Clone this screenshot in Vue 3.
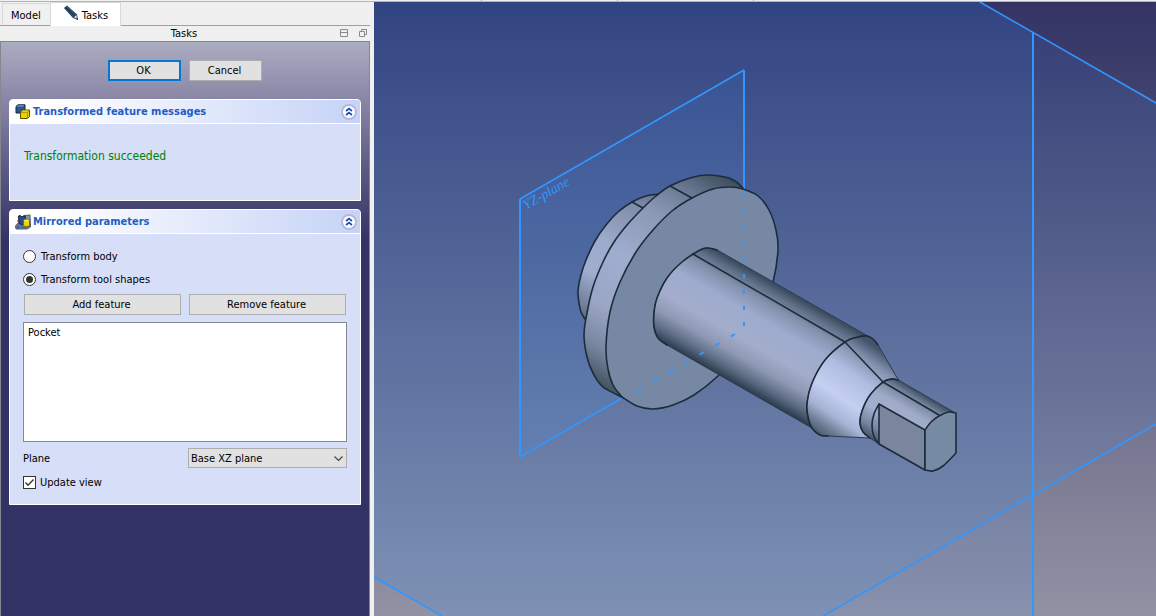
<script setup>
import { ref } from 'vue'

const mode = ref('shapes')
const plane = ref('xz')
const updateView = ref(true)
const features = ref(['Pocket'])

// Smooth curve commands through a list of points, continuing from the first one.
function through(pts) {
  let d = ''
  for (let i = 0; i < pts.length - 1; i++) {
    const a = pts[i - 1] || pts[i]
    const b = pts[i]
    const c = pts[i + 1]
    const e = pts[i + 2] || c
    d += ` C${b[0] + (c[0] - a[0]) / 6} ${b[1] + (c[1] - a[1]) / 6} ${c[0] - (e[0] - b[0]) / 6} ${c[1] - (e[1] - b[1]) / 6} ${c[0]} ${c[1]}`
  }
  return d
}
const open = (pts) => `M${pts[0][0]} ${pts[0][1]}${through(pts)}`
const back = (pts) => [...pts].reverse()

const hub = [[659, 194], [646, 196], [632, 202], [618, 212], [606, 225], [595, 241], [586, 260], [581, 275], [578, 291], [579, 303], [581, 312], [585, 319]]
const rim = [[743, 188], [735, 181], [725, 177], [707, 175], [690, 178], [670, 186], [656, 196], [643, 208], [627, 225], [614, 242], [603, 262], [593, 287], [587, 313], [584, 335], [587, 357], [593, 373], [603, 387], [622, 397]]
const face = [[622, 397], [613, 385], [608, 369], [606, 347], [610, 312], [620, 282], [636, 252], [653, 230], [672, 211], [692, 198], [713, 189], [730, 187], [743, 189], [758, 196], [769, 210], [776, 230], [778, 250], [773, 282], [760, 318], [742, 350], [718, 376], [694, 395], [673, 405], [653, 409], [637, 406], [622, 397]]
const root = [[717, 250], [708, 248], [700, 250], [682, 262], [667, 278], [657, 298], [654, 312], [654, 327], [658, 338], [667, 345]]
const shoulder = [[878, 345], [873, 339], [867, 336], [858, 337], [845, 342], [825, 360], [812, 383], [807, 403], [808, 417], [812, 428], [820, 435], [828, 436]]
const neck = [[898, 380], [892, 379], [883, 382], [870, 395], [862, 411], [860, 423], [863, 432], [870, 438]]

const shapes = {
  hub: `${open(hub)} L640 260 Z`,
  rim: `${open(rim)} L700 300 Z`,
  face: `${open(face)} Z`,
  shaft: `${open(root)} L812 428 L867 336 Z`,
  root: open(root),
  cone: `${open(shoulder)} L870 438${through(back(neck))} Z`,
  shoulder: open(shoulder),
  tip: `${open(neck)} L879 444 L925 470 V430 L953 412 Z`,
  neck: open(neck),
  step: open([[879, 404], [874, 414], [872, 425], [874, 437], [879, 444]]),
  end: `M925 470 V430${through([[925, 430], [931, 422], [939, 416], [949, 412], [956, 413]])} V453${through([[956, 453], [943, 466], [933, 471], [925, 470]])} Z`,
}
</script>

<template>
  <div class="app">
    <div class="toolbar-edge">
      <i class="tick"></i><i class="tick"></i><i class="tick"></i>
    </div>
    <div class="main">
      <aside class="dock">
        <nav class="tabs">
          <button type="button" class="tab">Model</button>
          <button type="button" class="tab active">
            <svg width="16" height="16" viewBox="0 0 16 16" aria-hidden="true">
              <path d="M1 3 L4 0.5 L14 9.5 L15 15 L10 13 Z" fill="#1d2f45" />
              <path d="M1.5 3 L4 1 L13.5 9.5 L10.5 12.5 Z" fill="#34587f" />
              <path d="M2.5 2.4 L12 11" stroke="#20384f" stroke-width="1.4" />
              <path d="M11 12.4 L13.3 10 L14 13.8 Z" fill="#e8eef4" />
              <path d="M13 13 L14.2 12.4 L15 15 Z" fill="#172530" />
            </svg>
            <span>Tasks</span>
          </button>
        </nav>
        <header class="title">
          <span>Tasks</span>
          <span class="tools">
            <button type="button" aria-label="Collapse">
              <svg width="9" height="9" viewBox="0 0 9 9"><path d="M0.5 0.5h7v7h-7z M0.5 3.5h7" fill="none" stroke="#8a8a8a" /></svg>
            </button>
            <button type="button" aria-label="Float">
              <svg width="9" height="9" viewBox="0 0 9 9"><path d="M2.5 2.5v-2h5v5h-2 M0.5 2.5h5v5h-5z" fill="none" stroke="#8a8a8a" /></svg>
            </button>
          </span>
        </header>

        <section class="panel">
          <div class="actions">
            <button type="button" class="btn primary">OK</button>
            <button type="button" class="btn">Cancel</button>
          </div>

          <section class="group">
            <header class="group-head">
              <svg width="16" height="16" viewBox="0 0 16 16" aria-hidden="true">
                <path d="M1 2.5 L3 0.8 L10 0.8 L10 7.5 L8 9 L1 9 Z" fill="#2f5585" stroke="#16283c" />
                <path d="M1.5 2.8 L3.4 1.3 H9.4 L8 2.8 Z" fill="#6b8fbd" />
                <path d="M5.5 8 L7.5 6 L14.5 6 L14.5 12.5 L12.5 14.5 L5.5 14.5 Z" fill="#edd400" stroke="#5e5000" />
                <path d="M5.8 8.3 H12.4 V14 M12.4 8.3 L14.3 6.4" fill="none" stroke="#a89000" />
                <path d="M7 7.3 H12.5 L13.2 6.7 H8 Z" fill="#fff27a" />
              </svg>
              <h2>Transformed feature messages</h2>
              <button type="button" class="fold" aria-label="Collapse messages">
                <svg width="16" height="16" viewBox="0 0 16 16">
                  <circle cx="8" cy="8" r="7" fill="#fff" stroke="#b4b9dc" stroke-width="2" />
                  <path d="M5 7 L8 4.5 L11 7 M5 11 L8 8.5 L11 11" fill="none" stroke="#1b49b5" stroke-width="1.7" />
                </svg>
              </button>
            </header>
            <div class="message">Transformation succeeded</div>
          </section>

          <section class="group">
            <header class="group-head">
              <svg width="16" height="16" viewBox="0 0 16 16" aria-hidden="true">
                <path d="M0.5 12 L3 9 L14 9 L15.5 13 L12 15 L1 15 Z" fill="#4a78b0" stroke="#54616e" />
                <path d="M4 2 L7 4 L9 1.5 L15 1 L15.5 12 L8 13 L4 10 Z" fill="#8b98a6" stroke="#4e5a66" />
                <path d="M3.5 2 Q5.5 0.5 7 3 Q9 1 10.5 2.5 L10 8 L7.5 11 L4 9 Z" fill="#24508c" stroke="#12263d" />
                <path d="M8.5 6.5 C8.5 4.5 14.5 4.5 14.5 6.5 V11 C14.5 13 8.5 13 8.5 11 Z" fill="#edd400" stroke="#7a6a10" />
                <path d="M9.5 6.5 Q11.5 7.8 13.8 6.5" fill="none" stroke="#fff27a" />
                <path d="M2 12.5h2v1.5h-2z M2.5 6h1.5v2h-1.5z" fill="#cc1f1f" />
              </svg>
              <h2>Mirrored parameters</h2>
              <button type="button" class="fold" aria-label="Collapse parameters">
                <svg width="16" height="16" viewBox="0 0 16 16">
                  <circle cx="8" cy="8" r="7" fill="#fff" stroke="#b4b9dc" stroke-width="2" />
                  <path d="M5 7 L8 4.5 L11 7 M5 11 L8 8.5 L11 11" fill="none" stroke="#1b49b5" stroke-width="1.7" />
                </svg>
              </button>
            </header>
            <form class="form" @submit.prevent>
              <label class="choice"><input v-model="mode" type="radio" name="mode" value="body" />Transform body</label>
              <label class="choice"><input v-model="mode" type="radio" name="mode" value="shapes" />Transform tool shapes</label>
              <div class="pair">
                <button type="button" class="btn">Add feature</button>
                <button type="button" class="btn">Remove feature</button>
              </div>
              <ul class="list">
                <li v-for="f in features" :key="f">{{ f }}</li>
              </ul>
              <div class="plane-row">
                <label for="plane">Plane</label>
                <span class="select">
                  <select id="plane" v-model="plane">
                    <option value="xy">Base XY plane</option>
                    <option value="xz">Base XZ plane</option>
                    <option value="yz">Base YZ plane</option>
                  </select>
                  <svg width="9" height="6" viewBox="0 0 9 6" aria-hidden="true"><path d="M0.5 0.5 L4.5 4.5 L8.5 0.5" fill="none" stroke="#444" stroke-width="1.2" /></svg>
                </span>
              </div>
              <label class="choice update">
                <span class="check">
                  <input v-model="updateView" type="checkbox" />
                  <svg v-if="updateView" width="13" height="13" viewBox="0 0 13 13" aria-hidden="true"><path d="M2.5 6.5 L5 9.3 L10.5 3.5" fill="none" stroke="#333" stroke-width="1.3" /></svg>
                </span>
                Update view
              </label>
            </form>
          </section>
        </section>
      </aside>

      <main class="view">
        <svg class="scene" viewBox="374 2 782 614" preserveAspectRatio="xMidYMid slice" role="img" aria-label="3D view of the shaft">
          <defs>
            <linearGradient id="sky" x1="0" y1="0" x2="0" y2="1">
              <stop offset="0" stop-color="#333365" />
              <stop offset="1" stop-color="#9292a4" />
            </linearGradient>
            <linearGradient id="hub" gradientUnits="userSpaceOnUse" x1="665" y1="185" x2="583" y2="324">
              <stop offset="0" stop-color="#4f6075" />
              <stop offset="0.2" stop-color="#808da9" />
              <stop offset="0.5" stop-color="#9dabcd" />
              <stop offset="0.7" stop-color="#a0adcf" />
              <stop offset="1" stop-color="#56667d" />
            </linearGradient>
            <linearGradient id="rim" gradientUnits="userSpaceOnUse" x1="741" y1="178" x2="610" y2="400">
              <stop offset="0" stop-color="#34454f" />
              <stop offset="0.14" stop-color="#667690" />
              <stop offset="0.28" stop-color="#8b97b5" />
              <stop offset="0.5" stop-color="#9fadcf" />
              <stop offset="0.7" stop-color="#9ba6c5" />
              <stop offset="0.85" stop-color="#77869f" />
              <stop offset="1" stop-color="#34454f" />
            </linearGradient>
            <linearGradient id="shaft" gradientUnits="userSpaceOnUse" x1="740" y1="263" x2="687" y2="356">
              <stop offset="0" stop-color="#36475a" />
              <stop offset="0.08" stop-color="#596a80" />
              <stop offset="0.2" stop-color="#8491ad" />
              <stop offset="0.36" stop-color="#9dabce" />
              <stop offset="0.6" stop-color="#a4adcb" />
              <stop offset="0.76" stop-color="#8f99b5" />
              <stop offset="0.9" stop-color="#5b6b82" />
              <stop offset="1" stop-color="#2d3e50" />
            </linearGradient>
            <linearGradient id="cone" gradientUnits="userSpaceOnUse" x1="889" y1="356" x2="828" y2="446">
              <stop offset="0" stop-color="#43546a" />
              <stop offset="0.14" stop-color="#8390ad" />
              <stop offset="0.32" stop-color="#b0bcdf" />
              <stop offset="0.56" stop-color="#c4cff2" />
              <stop offset="0.74" stop-color="#a8b4d6" />
              <stop offset="0.88" stop-color="#68788f" />
              <stop offset="1" stop-color="#3b4b5e" />
            </linearGradient>
            <linearGradient id="tip" gradientUnits="userSpaceOnUse" x1="926" y1="395" x2="893" y2="450">
              <stop offset="0" stop-color="#36475a" />
              <stop offset="0.15" stop-color="#78869f" />
              <stop offset="0.35" stop-color="#a0abc9" />
              <stop offset="0.6" stop-color="#a4aecf" />
              <stop offset="0.85" stop-color="#77859f" />
              <stop offset="1" stop-color="#4a5b70" />
            </linearGradient>
          </defs>

          <rect x="374" y="2" width="782" height="614" fill="url(#sky)" />

          <!-- translucent datum planes -->
          <g fill="#3296ff" fill-opacity="0.1">
            <path d="M374 2 H980 L1033 33 V616 H442 L374 577 Z" />
            <path d="M374 2 H980 L1156 103 V424 L823 616 H442 L374 577 Z" />
            <path d="M520 199 L744 70 V328 L520 457 Z" />
          </g>
          <g class="datum">
            <path d="M980 2 L1156 103" />
            <path d="M1156 424 L823 616" />
            <path d="M374 577 L442 616" />
            <path d="M622 398 L520 457 M520 199 L744 70" />
            <path class="upright" d="M1033 33 V616 M520 457 V199 M744 70 V189" />
          </g>
          <text class="datum-label" transform="translate(526 210) rotate(-30)">YZ-plane</text>

          <!-- solid body, back to front -->
          <g class="solid">
            <path fill="url(#hub)" :d="shapes.hub" />
            <path d="M632 202 L643 208" />
            <path fill="url(#rim)" :d="shapes.rim" />
            <path fill="#7688a3" :d="shapes.face" />
            <path d="M670 186 L692 198" />
            <path class="soft" fill="url(#shaft)" :d="shapes.shaft" />
            <path :d="shapes.root" />
            <path d="M693 254 L845 342" />
            <path class="soft" fill="url(#cone)" :d="shapes.cone" />
            <path :d="shapes.shoulder" />
            <path d="M845 342 L883 382" />
            <path class="soft" fill="url(#tip)" :d="shapes.tip" />
            <path :d="shapes.neck" />
            <path d="M883 382 L939 415" />
            <path :d="shapes.step" />
            <path fill="#7a869e" d="M879 404 L925 430 V470 L879 444 Z" />
            <path fill="#768aa4" :d="shapes.end" />
          </g>

          <!-- hidden part of the YZ plane outline -->
          <g class="datum">
            <path class="upright" stroke-dasharray="4 12" d="M744 194 V328" />
            <path class="upright" stroke-dasharray="5 13" d="M735 334 L630 395" />
          </g>
        </svg>
      </main>
    </div>
  </div>
</template>

<style>
body {
  margin: 0;
  background: #f0f0f0;
}
</style>

<style scoped>
.app {
  display: flex;
  flex-direction: column;
  height: 100vh;
  font-family: "DejaVu Sans Condensed", "DejaVu Sans", sans-serif;
  font-size: 11px;
  line-height: 15px;
  color: #000;
}
button,
select,
input {
  font: inherit;
  color: inherit;
  margin: 0;
}
.toolbar-edge {
  display: flex;
  gap: 135px;
  height: 1px;
  padding-left: 481px;
  background: #f0f0f0;
  border-bottom: 1px solid #b4b4b4;
  overflow: hidden;
}
.tick {
  width: 1px;
  flex: none;
  background: #b4b4b4;
}
.main {
  display: flex;
  flex: 1;
  min-height: 0;
}
.dock {
  display: flex;
  flex-direction: column;
  width: 370px;
  flex: none;
  padding-right: 4px;
  background: #f0f0f0;
}
.tabs {
  display: flex;
  align-items: flex-end;
  height: 23px;
  padding-left: 2px;
  border-bottom: 1px solid #a0a0a0;
}
.tab {
  display: flex;
  align-items: center;
  justify-content: center;
  gap: 3px;
  height: 22px;
  padding: 2px 9px 0 8px;
  border: 1px solid #d9d9d9;
  border-width: 1px 0 0 1px;
  background: #f0f0f0;
}
.tab.active {
  height: 24px;
  margin-bottom: -1px;
  padding: 1px 12px 0;
  border-width: 1px 1px 0;
  background: #fff;
}
.tab svg {
  margin-bottom: 4px;
}
.title {
  display: grid;
  grid-template-columns: 1fr auto 1fr;
  align-items: center;
  height: 15px;
  padding: 0 2px 0 0;
}
.title > span:first-child {
  grid-column: 2;
}
.tools {
  display: flex;
  justify-content: flex-end;
  gap: 10px;
}
.tools button {
  display: flex;
  padding: 0;
  border: 0;
  background: none;
}
.panel {
  display: flex;
  flex-direction: column;
  gap: 8px;
  flex: 1;
  padding: 18px 8px 0;
  border: 1px solid #828790;
  border-bottom: 0;
  background: #333264 linear-gradient(#acacc1, #8a87a7 56px, #5b5982 128px, #333264 200px) no-repeat 0 0 / 100% 200px;
}
.actions {
  display: flex;
  justify-content: center;
  gap: 8px;
  margin-bottom: 10px;
}
.btn {
  height: 21px;
  padding: 0 10px 0 8px;
  border: 1px solid #adadad;
  background: #e1e1e1;
}
.actions .btn {
  width: 73px;
}
.btn.primary {
  border: 2px solid #0078d7;
}
.group {
  border: 1px solid #fff;
  border-radius: 4px 4px 0 0;
  background: #d6dff7;
  overflow: hidden;
}
.group-head {
  display: flex;
  align-items: center;
  gap: 2px;
  height: 23px;
  padding: 0 3px 0 5px;
  border-bottom: 1px solid #fff;
  background: linear-gradient(90deg, #fff, #fff 10%, #c6d3f7);
}
.group-head h2 {
  flex: 1;
  margin: 0;
  font-size: 11px;
  font-weight: bold;
  color: #215dc6;
}
.fold {
  display: flex;
  padding: 0;
  border: 0;
  background: none;
}
.message {
  padding: 25px 14px 36px;
  font-size: 12px;
  color: #008000;
}
.form {
  display: flex;
  flex-direction: column;
  padding: 11px 13px 14px;
}
.choice {
  display: flex;
  align-items: center;
  gap: 5px;
  height: 23px;
}
.choice input {
  position: relative;
  appearance: none;
  width: 13px;
  height: 13px;
  border: 1px solid #333;
  background: #fff;
}
.choice input[type="radio"] {
  border-radius: 50%;
}
.choice input[type="radio"]:checked::after {
  content: "";
  position: absolute;
  inset: 2px;
  border-radius: 50%;
  background: #333;
}
.check {
  position: relative;
  display: flex;
}
.check svg {
  position: absolute;
  inset: 0;
  pointer-events: none;
}
.pair {
  display: grid;
  grid-template-columns: 1fr 1fr;
  gap: 8px;
  margin: 3px 1px 7px;
}
.list {
  height: 116px;
  margin: 0 0 6px;
  padding: 1px 4px;
  border: 1px solid #828790;
  background: #fff;
  list-style: none;
}
.list li {
  height: 18px;
  line-height: 18px;
}
.plane-row {
  display: grid;
  grid-template-columns: 165px 1fr;
  align-items: center;
}
.select {
  position: relative;
  display: flex;
}
.select select {
  appearance: none;
  width: 100%;
  height: 20px;
  padding: 0 20px 0 2px;
  border: 1px solid #adadad;
  border-radius: 0;
  background: #e1e1e1;
}
.select svg {
  position: absolute;
  right: 4px;
  top: 8px;
  pointer-events: none;
}
.update {
  gap: 4px;
  height: 15px;
  margin-top: 7px;
}
.view {
  flex: 1;
  min-width: 0;
}
.scene {
  display: block;
  width: 100%;
  height: 100%;
}
.datum {
  fill: none;
  stroke: #3296ff;
  stroke-width: 1.6;
}
.datum .upright {
  stroke-width: 2;
}
.datum-label {
  font: italic 14px "Liberation Serif", serif;
  fill: #3296ff;
}
.solid {
  fill: none;
  stroke: #1b2c3b;
  stroke-width: 1.6;
  stroke-linejoin: round;
  stroke-linecap: round;
}
.solid .soft {
  stroke: #2b3b4c;
  stroke-width: 1;
}
</style>
